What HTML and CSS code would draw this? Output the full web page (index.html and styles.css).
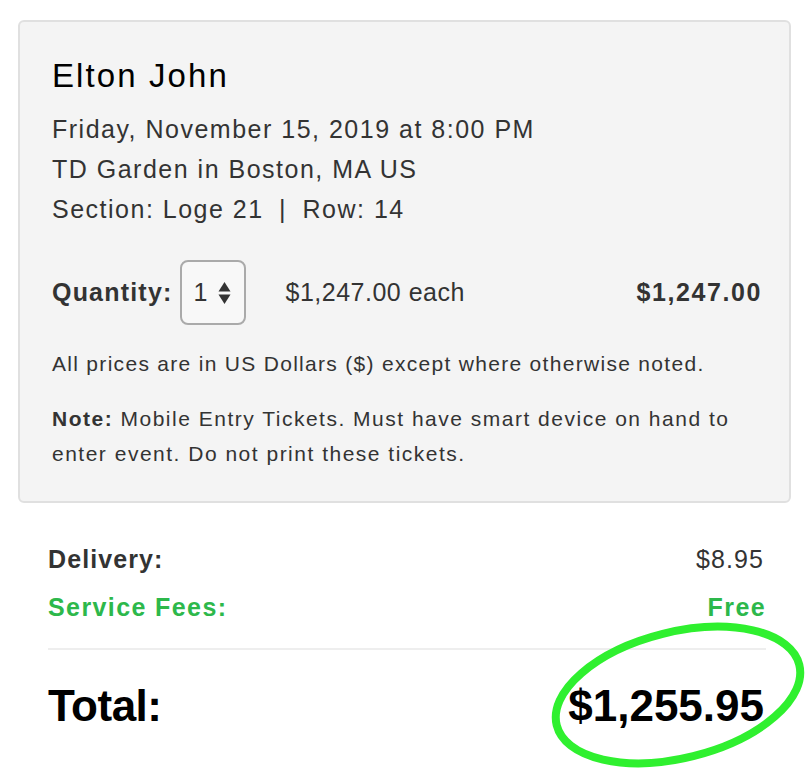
FILE: index.html
```html
<html>
<head>
	<link rel="stylesheet" href="styles.css">
</head>

<body>

<div class="page">
	<div class="ticket">
		<h2 class="event-name">Elton John</h2>
		<div class="event-line">Friday, November 15, 2019 at 8:00 PM</div>
		<div class="event-line">TD Garden in Boston, MA US</div>
		<div class="event-line">Section: Loge 21 <span class="sep">|</span> Row: 14</div>

		<div class="qty-row">
			<span class="qty-label">Quantity:</span>
			<div class="qty-select">
				<span>1</span>
				<svg class="arrows" width="13" height="24" viewBox="0 0 13 24">
					<path d="M6.5 1 L12.5 10.5 L0.5 10.5 Z" fill="#333"/>
					<path d="M6.5 23 L12.5 13.5 L0.5 13.5 Z" fill="#333"/>
				</svg>
			</div>
			<span class="each">$1,247.00 each</span>
			<span class="subtotal">$1,247.00</span>
		</div>

		<p class="small">All prices are in US Dollars ($) except where otherwise noted.</p>
		<p class="small note"><b>Note:</b> Mobile Entry Tickets. Must have smart device on hand to enter event. Do not print these tickets.</p>
	</div>

	<div class="summary">
		<div class="sum-row">
			<span class="sum-label">Delivery:</span>
			<span>$8.95</span>
		</div>
		<div class="sum-row fees">
			<span class="sum-label">Service Fees:</span>
			<span class="sum-label">Free</span>
		</div>
		<div class="total-row">
			<span>Total:</span>
			<span class="total-amount">$1,255.95</span>
			<svg class="circle" width="280" height="180" viewBox="0 0 280 180">
				<ellipse cx="150" cy="73" rx="125" ry="63" transform="rotate(-14 150 73)" fill="none" stroke="#2ff02f" stroke-width="8"/>
			</svg>
		</div>
	</div>
</div>

</body>
</html>
```

FILE: styles.css
```css
body{
	margin: 0;
	background: #fff;
	font-family: "Liberation Sans", Arial, sans-serif;
	color: #333;
}
.page{
	padding: 20px 21px 0 18px;
}
.ticket{
	background: #f4f4f4;
	border: 2px solid #e0e0e0;
	border-radius: 6px;
	padding: 34px 27px 30px 32px;
}
.event-name{
	margin: 0 0 13px 0;
	font-size: 33px;
	font-weight: normal;
	color: #000;
	line-height: 40px;
	letter-spacing: 2.1px;
}
.event-line{
	font-size: 25px;
	line-height: 40px;
	letter-spacing: 1.5px;
}
.sep{
	margin: 0 7px;
}
.qty-row{
	display: flex;
	align-items: center;
	margin-top: 31px;
	font-size: 25px;
	letter-spacing: 1.2px;
}
.qty-label{
	font-weight: bold;
	margin-right: 7px;
}
.qty-select{
	width: 62px;
	height: 61px;
	border: 2px solid #aaa;
	border-radius: 8px;
	background: #f8f8f8;
	display: flex;
	align-items: center;
	justify-content: center;
	gap: 11px;
	letter-spacing: 0;
}
.arrows{
	display: block;
}
.each{
	margin-left: 40px;
	flex: 1;
	letter-spacing: 0.5px;
}
.subtotal{
	font-weight: bold;
	letter-spacing: 1.6px;
}
.small{
	font-size: 21px;
	line-height: 35px;
	margin: 21px 0 0 0;
	letter-spacing: 1.3px;
}
.note{
	margin-top: 20px;
	letter-spacing: 1.5px;
}
.summary{
	padding: 32px 27px 0 30px;
}
.sum-row{
	display: flex;
	justify-content: space-between;
	font-size: 25px;
	line-height: 48px;
	letter-spacing: 1.1px;
}
.sum-label{
	font-weight: bold;
}
.fees{
	color: #2db84b;
	padding-bottom: 17px;
	border-bottom: 2px solid #eee;
	margin-right: -2px;
	letter-spacing: 1.4px;
}
.total-row{
	position: relative;
	display: flex;
	justify-content: space-between;
	align-items: center;
	height: 112px;
	font-size: 44px;
	font-weight: bold;
	color: #000;
}
.total-row span:first-child{
	letter-spacing: -0.5px;
}
.circle{
	position: absolute;
	right: -44px;
	top: -28px;
}
```
